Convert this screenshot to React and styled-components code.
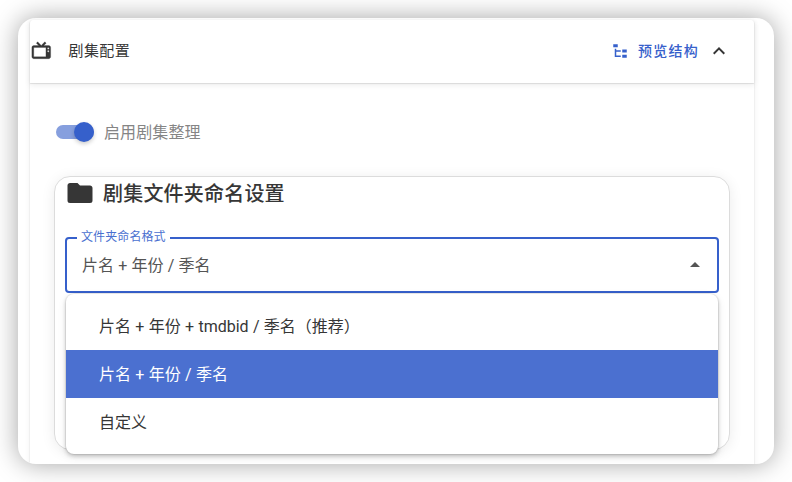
import React, { useState } from 'react';

import styled, { createGlobalStyle } from 'styled-components';

const GlobalStyle = createGlobalStyle`
  * {
    box-sizing: border-box;
  }
  body {
    margin: 0;
    background: #fff;
    color: #363636;
    font-family: Roboto, "Noto Sans CJK SC", sans-serif;
    font-size: 16px;
  }
`;

const Page = styled.div`
  width: 792px;
  height: 482px;
  padding: 18px;
  overflow: hidden;
`;

const Window = styled.div`
  width: 756px;
  height: 446px;
  padding: 2px 19px 0 11px;
  border-radius: 18px;
  background: #fff;
  overflow: hidden;
  box-shadow: 0 0 26px rgba(0, 0, 0, 0.36);
`;

const Panel = styled.div`
  height: 460px;
  border: solid #f0f0f0;
  border-width: 0 1px;
  border-radius: 4px 4px 0 0;
  box-shadow: 0 0 5px rgba(0, 0, 0, 0.05);
`;

const Header = styled.div`
  display: flex;
  align-items: center;
  height: 63px;
  padding: 0 23px 2px 0;
  border-radius: 4px 4px 0 0;
  background: #fff;
  box-shadow: 0 1px 1px rgba(0, 0, 0, 0.1), 0 2px 6px rgba(0, 0, 0, 0.08);
`;

const Title = styled.span`
  flex: 1;
  margin-left: 16px;
  font-size: 15px;
  line-height: 22px;
  letter-spacing: 0.4px;
`;

const PreviewButton = styled.button`
  display: flex;
  align-items: center;
  gap: 9px;
  margin-right: 8px;
  padding: 0;
  border: 0;
  background: none;
  color: #3660cb;
  font: 500 14px/20px Roboto, "Noto Sans CJK SC", sans-serif;
  letter-spacing: 1.25px;
`;

const Icon = styled.svg`
  display: block;
  flex: none;
  width: ${(props) => props.$size}px;
  height: ${(props) => props.$size}px;
  fill: currentColor;
  stroke: currentColor;
  stroke-width: ${(props) => props.$stroke};
`;

const Content = styled.div`
  padding: 38px 24px 0;
`;

const SwitchRow = styled.div`
  display: flex;
  align-items: center;
  gap: 10px;
  height: 22px;
  margin: 0 0 33px 2px;
  color: #858585;
  letter-spacing: 0.1px;
`;

const SwitchLabel = styled.span`
  padding-bottom: 2px;
`;

const Track = styled.button`
  display: flex;
  align-items: center;
  justify-content: ${(props) => (props.$on ? 'flex-end' : 'flex-start')};
  width: 38px;
  height: 14px;
  padding: 0;
  border: 0;
  border-radius: 7px;
  background: ${(props) => (props.$on ? '#869fde' : '#bbb')};
`;

const Thumb = styled.span`
  width: 20px;
  height: 20px;
  border-radius: 50%;
  background: #3660cb;
  box-shadow: 0 2px 4px rgba(0, 0, 0, 0.2);
`;

const Card = styled.div`
  height: 274px;
  padding: 0 10px;
  border: 1px solid #dcdcdc;
  border-radius: 16px;
  background: #fff;
  box-shadow: 0 2px 14px rgba(0, 0, 0, 0.08);
`;

const CardTitle = styled.div`
  display: flex;
  align-items: center;
  gap: 8px;
  height: 31px;
  font-size: 20px;
  font-weight: 500;
  letter-spacing: 0.2px;
`;

const Select = styled.div`
  position: relative;
  margin-top: 29px;
`;

const Field = styled.div`
  display: flex;
  align-items: center;
  justify-content: space-between;
  height: 56px;
  padding: 0 10px 2px 15px;
  border: 2px solid #3660cb;
  border-radius: 4px;
  color: #545454;
  word-spacing: 0.25px;
`;

const Label = styled.label`
  position: absolute;
  top: -9px;
  left: 12px;
  padding: 0 4px;
  background: #fff;
  color: #4a70d0;
  font-size: 12px;
  line-height: 18px;
  letter-spacing: 0.1px;
`;

const Menu = styled.div`
  position: absolute;
  top: 57px;
  left: 1px;
  right: 1px;
  padding: 8px 0;
  border-radius: 8px;
  background: #fff;
  box-shadow: 0 0 1px 1px rgba(0, 0, 0, 0.07), 0 2px 4px rgba(0, 0, 0, 0.2),
    0 3px 10px rgba(0, 0, 0, 0.08);
`;

const Option = styled.div`
  display: flex;
  align-items: center;
  height: 48px;
  padding: 0 0 2px 33px;
  background: ${(props) => (props.$active ? '#4b70d0' : 'transparent')};
  color: ${(props) => (props.$active ? '#fff' : '#363636')};
  word-spacing: 0.35px;
`;

const icons = {
  tv: 'M8.16,3L6.75,4.41L9.34,7H4C2.89,7 2,7.89 2,9V19C2,20.11 2.89,21 4,21H20C21.11,21 22,20.11 22,19V9C22,7.89 21.11,7 20,7H14.66L17.25,4.41L15.84,3L12,6.84L8.16,3M4,9H17V19H4V9M19.5,9A1,1 0 0,1 20.5,10A1,1 0 0,1 19.5,11A1,1 0 0,1 18.5,10A1,1 0 0,1 19.5,9M19.5,12A1,1 0 0,1 20.5,13A1,1 0 0,1 19.5,14A1,1 0 0,1 18.5,13A1,1 0 0,1 19.5,12Z',
  tree: 'M3,3H9V7H3V3M15,10H21V14H15V10M15,17H21V21H15V17M13,13H7V18H13V20H7L5,20V9H7V11H13V13Z',
  up: 'M7.41,15.41L12,10.83L16.59,15.41L18,14L12,8L6,14L7.41,15.41Z',
  folder: 'M10,4H4C2.89,4 2,4.89 2,6V18A2,2 0 0,0 4,20H20A2,2 0 0,0 22,18V8C22,6.89 21.1,6 20,6H12L10,4Z',
  caret: 'M7,15L12,10L17,15H7Z',
};

function MdIcon({ name, size = 24, stroke = 0 }) {
  return (
    <Icon $size={size} $stroke={stroke} viewBox="0 0 24 24">
      <path d={icons[name]} fillRule="evenodd" />
    </Icon>
  );
}

const formats = ['片名 + 年份 + tmdbid / 季名（推荐）', '片名 + 年份 / 季名', '自定义'];

export default function App() {
  const [enabled, setEnabled] = useState(true);
  const [selected, setSelected] = useState(1);

  return (
    <Page>
      <GlobalStyle />
      <Window>
        <Panel>
          <Header>
            <MdIcon name="tv" size={22.5} stroke={0.3} />
            <Title>剧集配置</Title>
            <PreviewButton>
              <MdIcon name="tree" size={18} />
              预览结构
            </PreviewButton>
            <MdIcon name="up" />
          </Header>
          <Content>
            <SwitchRow>
              <Track $on={enabled} onClick={() => setEnabled(!enabled)}>
                <Thumb />
              </Track>
              <SwitchLabel>启用剧集整理</SwitchLabel>
            </SwitchRow>
            <Card>
              <CardTitle>
                <MdIcon name="folder" size={30} />
                剧集文件夹命名设置
              </CardTitle>
              <Select>
                <Field>
                  {formats[selected]}
                  <MdIcon name="caret" />
                </Field>
                <Label>文件夹命名格式</Label>
                <Menu>
                  {formats.map((format, index) => (
                    <Option
                      key={format}
                      $active={index === selected}
                      onClick={() => setSelected(index)}
                    >
                      {format}
                    </Option>
                  ))}
                </Menu>
              </Select>
            </Card>
          </Content>
        </Panel>
      </Window>
    </Page>
  );
}
